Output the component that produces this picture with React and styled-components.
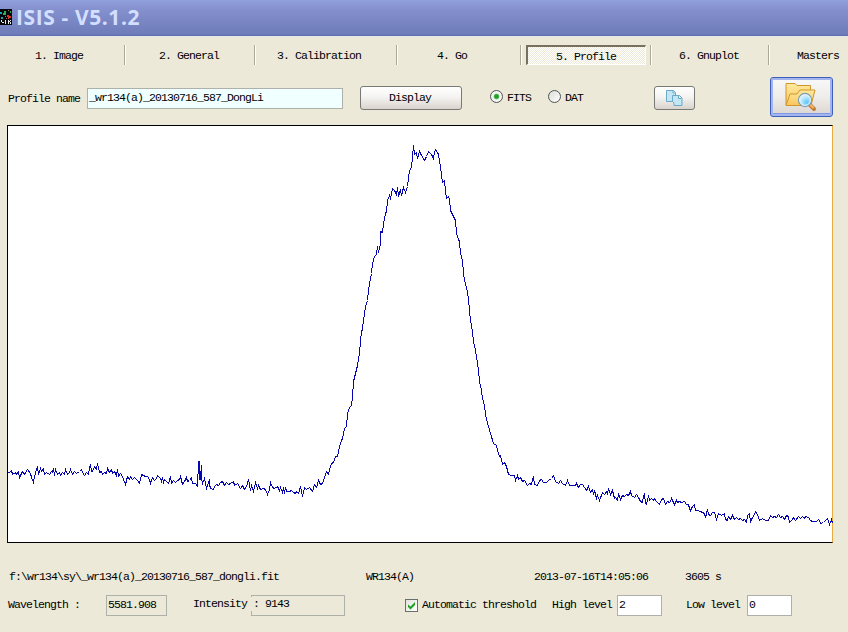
import React from "react";
import styled, { createGlobalStyle, css } from "styled-components";

const GlobalStyle = createGlobalStyle`
  * { box-sizing: border-box; }
  body { margin: 0; background: #ece9d8; overflow: hidden; }
`;

const Window = styled.main`
  width: 848px;
  height: 632px;
  display: flex;
  flex-direction: column;
  overflow: hidden;
  background: #ece9d8;
  color: #000;
  font: 11.5px/14px "Liberation Mono", monospace;
  letter-spacing: -0.9px;
  white-space: pre;
`;

const TitleBar = styled.header`
  flex: none;
  height: 37px;
  display: flex;
  align-items: center;
  gap: 4px;
  border-bottom: 1px solid #e5e6e6;
  background: linear-gradient(#929fdd 0, #8490ce 28%, #6f7cba 94%, #5d6cae 100%);
`;

const Title = styled.h1`
  margin: 0 0 2px;
  font: 700 21px/34px "Open Sans", sans-serif;
  letter-spacing: 0.6px;
  color: #d3dfff;
`;

const Tabs = styled.nav`
  flex: none;
  height: 40px;
  padding-top: 8px;
  display: flex;
`;

const Tab = styled.div`
  flex: none;
  width: ${(p) => p.$width}px;
  height: 20px;
  padding-left: ${(p) => p.$indent}px;
  line-height: 21px;
  ${(p) =>
    !p.$last &&
    css`
      border-right: 1px solid #fff;
      box-shadow: inset -1px 0 #aca899;
    `}
`;

const ActiveTab = styled.div`
  width: 120px;
  height: 20px;
  padding-left: 28px;
  line-height: 20px;
  border: 1px solid;
  border-width: 2px 1px 1px 2px;
  border-color: #77705f #fff #fff #77705f;
  background: repeating-conic-gradient(#fff 0 25%, #ece9d8 0 50%) 0 0 / 2px 2px;
`;

const Controls = styled.section`
  flex: none;
  height: 48px;
  display: flex;
  padding-left: 8px;
`;

const Label = styled.label`
  flex: none;
  width: ${(p) => p.$width}px;
  margin-top: ${(p) => p.$top}px;
`;

const Field = styled.div`
  flex: none;
  width: ${(p) => p.$width}px;
  height: 21px;
  margin-top: ${(p) => p.$top}px;
  padding-left: 1px;
  border: 1px solid #aeb0aa;
  line-height: 17px;
  background: ${(p) => p.$fill || "transparent"};
`;

const Button = styled.button`
  flex: none;
  width: ${(p) => p.$width}px;
  height: 24px;
  margin: 9px 0 0 ${(p) => p.$left}px;
  padding: 0 2px 0 0;
  display: flex;
  align-items: center;
  justify-content: center;
  border: 1px solid #777975;
  border-radius: 3px;
  background: linear-gradient(#fff, #f5f4f2 45%, #d9d3cd);
  color: #000;
  font: inherit;
  letter-spacing: inherit;
`;

const BrowseButton = styled(Button)`
  height: 40px;
  margin-top: 0;
  border-color: #3d5fb8;
  background: linear-gradient(#f8f8fa, #efede9 50%, #dad4d0);
  box-shadow: inset 0 0 0 2px #a3b5ef, inset 0 -3px #8299e5;
`;

const Radio = styled.span`
  flex: none;
  width: 13px;
  height: 13px;
  margin: 13px 4px 0 ${(p) => p.$left}px;
  border: 1px solid #4c5655;
  border-radius: 50%;
  background: ${(p) =>
    p.$checked
      ? "radial-gradient(circle, #23a023 0 1.5px, #54b755 2.3px, #f4f5f2 3.3px)"
      : "linear-gradient(135deg, #dcdcd7, #fff)"};
`;

const Plot = styled.section`
  flex: none;
  width: 826px;
  height: 418px;
  margin-left: 7px;
  border: 1px solid #000;
  border-right-color: #e6ac42;
  background: #fff;
  svg { display: block; }
`;

const InfoRow = styled.section`
  flex: none;
  height: 52px;
  display: flex;
  padding: 27px 0 0 9px;
`;

const Info = styled.span`
  flex: none;
  width: ${(p) => p.$width}px;
`;

const Readings = styled.footer`
  display: flex;
  padding-left: 8px;
`;

const IntensityGroup = styled.div`
  display: grid;
  width: 152px;
  margin-left: 26px;
  > * { grid-row: 1; grid-column: 1; }
`;

const IntensityField = styled(Field)`
  justify-self: end;
`;

const IntensityText = styled.span`
  align-self: start;
  justify-self: start;
  margin-top: 2px;
  padding-right: 1px;
  background: #ece9d8;
  z-index: 1;
`;

const CheckBox = styled.span`
  flex: none;
  width: 13px;
  height: 13px;
  margin: 4px 4px 0 60px;
  border: 1px solid #68706b;
  background: linear-gradient(135deg, #e1e2dc, #fff);
  svg { display: block; }
`;

// Each run is [originX, originY, x, y, x, y, ...] in thirds of a pixel from its origin.
const RUNS = [
  [0, 440, 23,96,28,97,33,92,38,102,45,97,50,103,54,95,58,111,66,95,72,103,77,98,83,89,90,100,95,113,99,127,103,108,108,88,111,83,115,104,120,85,125,93,130,86,134,104,140,97,148,102,153,93,158,96,161,86,164,106,167,87,172,103,177,98,180,106,186,96,192,102,197,88,202,102,207,96,212,88,217,102,224,94,230,100,238,93,244,88,248,97,254,107,258,97,264,104,267,84,271,73,275,93,280,90,284,80,289,88,293,70,297,97,303,94,308,102,314,96,318,100,323,85,328,98,333,88,337,101,342,95,348,106,352,87,356,110,362,99,366,108,370,117,376,134,382,109,388,118,392,110,398,117,403,112,408,118,413,120,418,130,425,103,431,105,437,109,443,109,449,118,452,130,457,112,462,121,468,116,473,106,480,114,484,123,486,112,490,128,494,118,499,125,505,130,510,110,515,130,520,122,526,128,532,122,537,119,541,108,546,132,552,123,558,113,562,124,568,120,574,112,578,130,586,129,592,138,596,64,597,118,598,64,600,118],
  [200, 440, 4,76,5,115,8,130,14,115,15,130,20,146,27,118,28,132,32,146,39,148,44,139,50,134,56,136,62,128,68,125,72,136,80,126,86,133,92,130,99,124,104,136,113,131,120,145,126,137,132,147,139,140,144,118,150,152,154,137,160,153,166,128,171,145,176,137,182,147,190,146,197,147,203,163,208,148,212,128,216,141,224,144,232,140,238,152,242,142,246,157,249,142,252,160,256,142,260,153,268,153,274,150,280,156,286,160,290,153,295,159,302,140,307,169,313,143,318,149,328,141,337,153,344,134,349,142,356,122,362,133,368,130,373,112,380,95,384,103,388,88,394,71,400,68,406,50,411,50,415,35,419,20,424,0],
  [310, 290, 98,444,103,415,108,408,112,370,117,352,123,347,126,318,131,275,137,250,141,225,147,190,151,150,154,128,158,116,161,90,166,50,171,30,175,0],
  [330, 130, 118,460,123,430,128,400,133,378,138,373,142,350,146,367,150,340,152,304,158,306,161,280,165,250,169,243,173,212,177,197,182,206,187,176,194,180,198,192,202,173,206,198,211,178,215,196,220,172,226,188,231,170,234,145,238,122,243,112,247,80,249,46],
  [400, 130, 41,46,44,72,49,68,53,84,59,65,64,76,72,91,79,80,86,65,93,72,99,85,103,67,107,59,112,68,116,73,120,108,124,135,128,157,132,152,136,180,138,206,145,199,149,208,152,240,158,252,166,270,170,310,174,328,178,335,182,370,187,392,190,430,192,448,197,462,202,485,205,508],
  [310, 290, 477,60,482,90,487,125,491,155,495,180,500,200,504,240,508,275,513,300,517,325,522,345,526,372,531,400,536,410,541,430,549,460,558,465,563,482,568,499,572,495,577,522,583,518,589,530],
  [500, 460, 26,43,35,45,42,47,47,62,51,46,55,57,62,53,68,65,73,61,81,76,88,69,94,72,100,48,104,72,112,76,118,62,124,58,130,67,140,67,146,60,154,56,161,45,165,63,174,71,181,62,188,70,196,76,201,60,208,75,225,76,229,69,234,82,240,74,247,74,254,82,259,90,264,79,270,96,276,87,280,102,284,92,290,116,293,105,299,121,307,97,314,104,320,94,323,103,326,85,332,103,336,91,342,115,346,112,352,122,356,100,360,119,366,107,374,108,380,103,386,106,390,94,395,106,404,111,410,104,416,112,420,124,426,127,431,108,434,103,436,130,440,133,444,105,449,120,454,115,459,122,464,114,470,123,478,134,484,118,490,115,497,132,503,124,508,127],
  [670, 460, 0,124,5,115,9,127,13,134,18,120,22,127,28,123,34,128,42,125,48,133,54,133,57,144,62,152,68,139,72,134,77,150,82,150,90,155,98,158,103,160,107,172,112,148,116,162,122,166,128,158,133,157,138,178,146,161,153,165,162,160,166,177,172,182,176,168,180,177,187,166,193,178,198,171,204,179,210,175,218,180,224,178,228,186,232,167,237,161,241,184,246,173,251,168,257,154,263,163,268,182,276,176,286,182,294,180,300,166,306,172,312,170,318,172,324,162,330,173,337,168,343,178,349,165,355,168,359,187,366,178,371,173,376,182,384,170,392,176,398,169,403,176,407,169,414,173,420,181,428,185,438,184,445,178,449,182,452,191,460,187,466,182,471,175,478,193,483,177,488,190],
];

const tracePoints = RUNS.flatMap(([ox, oy, ...values]) => {
  const points = [];
  for (let i = 0; i < values.length; i += 2) {
    points.push(`${Math.floor(ox + values[i] / 3) + 0.5},${Math.floor(oy + values[i + 1] / 3) + 0.5}`);
  }
  return points;
}).join(" ");

const Spectrum = () => (
  <svg width="824" height="416" viewBox="8 126 824 416" overflow="visible">
    <polyline points={tracePoints} fill="none" stroke="#0606b0" shapeRendering="crispEdges" />
  </svg>
);

const AppIcon = () => (
  <svg width="12" height="18" viewBox="0 9 12 18" shapeRendering="crispEdges">
    <path d="M0 9h12v16H0z" fill="#05050b" />
    <path d="M0 12h2v2H0zM1 17h2v2H1z" fill="#18a7b0" />
    <path d="M4 11h2v2H4zM3 13h3v2H3zM5 16h1v1H5zM10 11h1v2h-1z" fill="#24b44a" />
    <path d="M7 15h2v1h2v2H9v1H8v-2H7z" fill="#d53628" />
    <path d="M1 20h1v2H1zM2 22h2v1H2zM5 20h1v4H5zM8 20h1v4H8zM9 21h1v1H9zM10 20h1v1h-1zM10 22h1v2h-1z" fill="#e8ece5" />
    <path d="M8 10h1v1H8zM6 18h1v1H6z" fill="#9e7a45" />
  </svg>
);

const CopyIcon = () => (
  <svg width="18" height="18" viewBox="0 0 18 18">
    <g fill="#c3e6f5" stroke="#6ba9c6" strokeLinejoin="round">
      <path d="M1.500 1.500h7l2 2v9h-9z" />
      <path d="M8 1.500v2.500h2.500" fill="#f5fcff" />
      <path d="M7.500 6.500h7l2.500 2.500v7.500h-8v-2.500l-1.500-1.500z" />
      <path d="M13.500 6.500v3h3" fill="#f5fcff" />
    </g>
  </svg>
);

const FolderSearchIcon = () => (
  <svg width="34" height="32" viewBox="0 0 34 32">
    <defs>
      <linearGradient id="folder" x2="0" y2="1">
        <stop stopColor="#ffe9a0" />
        <stop offset="1" stopColor="#f8c65a" />
      </linearGradient>
      <radialGradient id="lens" cx=".65" cy=".7">
        <stop stopColor="#5cc4f8" />
        <stop offset="1" stopColor="#c9edff" />
      </radialGradient>
    </defs>
    <g fill="url(#folder)" stroke="#d0952b" strokeLinejoin="round">
      <path d="M2 24V2.500h9l2 2h13.500V24z" />
      <path d="M2 24.500l4-11.500h7l3-4h15l-4 15.500z" />
    </g>
    <path d="M25 23l5 5" stroke="#c27d34" strokeWidth="4" strokeLinecap="round" />
    <path d="M25 22.500l4.500 4.500" stroke="#f8b768" strokeWidth="2" />
    <circle cx="21" cy="19" r="6.500" fill="url(#lens)" stroke="#7e9bb3" strokeWidth="1.300" />
    <circle cx="21" cy="19" r="5.400" fill="none" stroke="#e8f8ff" />
  </svg>
);

export default function App() {
  return (
    <Window>
      <GlobalStyle />
      <TitleBar>
        <AppIcon />
        <Title>ISIS - V5.1.2</Title>
      </TitleBar>
      <Tabs>
        <Tab $width={126} $indent={35}>1. Image</Tab>
        <Tab $width={130} $indent={33}>2. General</Tab>
        <Tab $width={142} $indent={21}>3. Calibration</Tab>
        <Tab $width={124} $indent={39}>4. Go</Tab>
        <Tab $width={130} $indent={4}><ActiveTab>5. Profile</ActiveTab></Tab>
        <Tab $width={118} $indent={27}>6. Gnuplot</Tab>
        <Tab $width={78} $indent={27} $last>Masters</Tab>
      </Tabs>
      <Controls>
        <Label $width={79} $top={15}>Profile name</Label>
        <Field $width={256} $top={11} $fill="#f0ffff">_wr134(a)_20130716_587_DongLi</Field>
        <Button $width={102} $left={17}>Display</Button>
        <Radio $left={28} $checked />
        <Label $width={25} $top={14}>FITS</Label>
        <Radio $left={16} />
        <Label $width={19} $top={14}>DAT</Label>
        <Button $width={41} $left={70} aria-label="Copy"><CopyIcon /></Button>
        <BrowseButton $width={63} $left={75} aria-label="Browse"><FolderSearchIcon /></BrowseButton>
      </Controls>
      <Plot><Spectrum /></Plot>
      <InfoRow>
        <Info $width={357}>f:\wr134\sy\_wr134(a)_20130716_587_dongli.fit</Info>
        <Info $width={168}>WR134(A)</Info>
        <Info $width={151}>2013-07-16T14:05:06</Info>
        <Info $width={60}>3605 s</Info>
      </InfoRow>
      <Readings>
        <Label $width={98} $top={3}>Wavelength :</Label>
        <Field $width={61} $top={0}>5581.908</Field>
        <IntensityGroup>
          <IntensityField $width={94} $top={0} />
          <IntensityText>Intensity : 9143</IntensityText>
        </IntensityGroup>
        <CheckBox>
          <svg width="11" height="11" viewBox="0 0 11 11">
            <path d="M2 4.500v2.500l2.500 2.500L9 5V2L4.500 6.500z" fill="#21a121" />
          </svg>
        </CheckBox>
        <Label $width={130} $top={3}>Automatic threshold</Label>
        <Label $width={65} $top={3}>High level</Label>
        <Field $width={45} $top={0} $fill="#fff">2</Field>
        <Label $width={85} $top={3}>{"    Low level"}</Label>
        <Field $width={45} $top={0} $fill="#fff">0</Field>
      </Readings>
    </Window>
  );
}
